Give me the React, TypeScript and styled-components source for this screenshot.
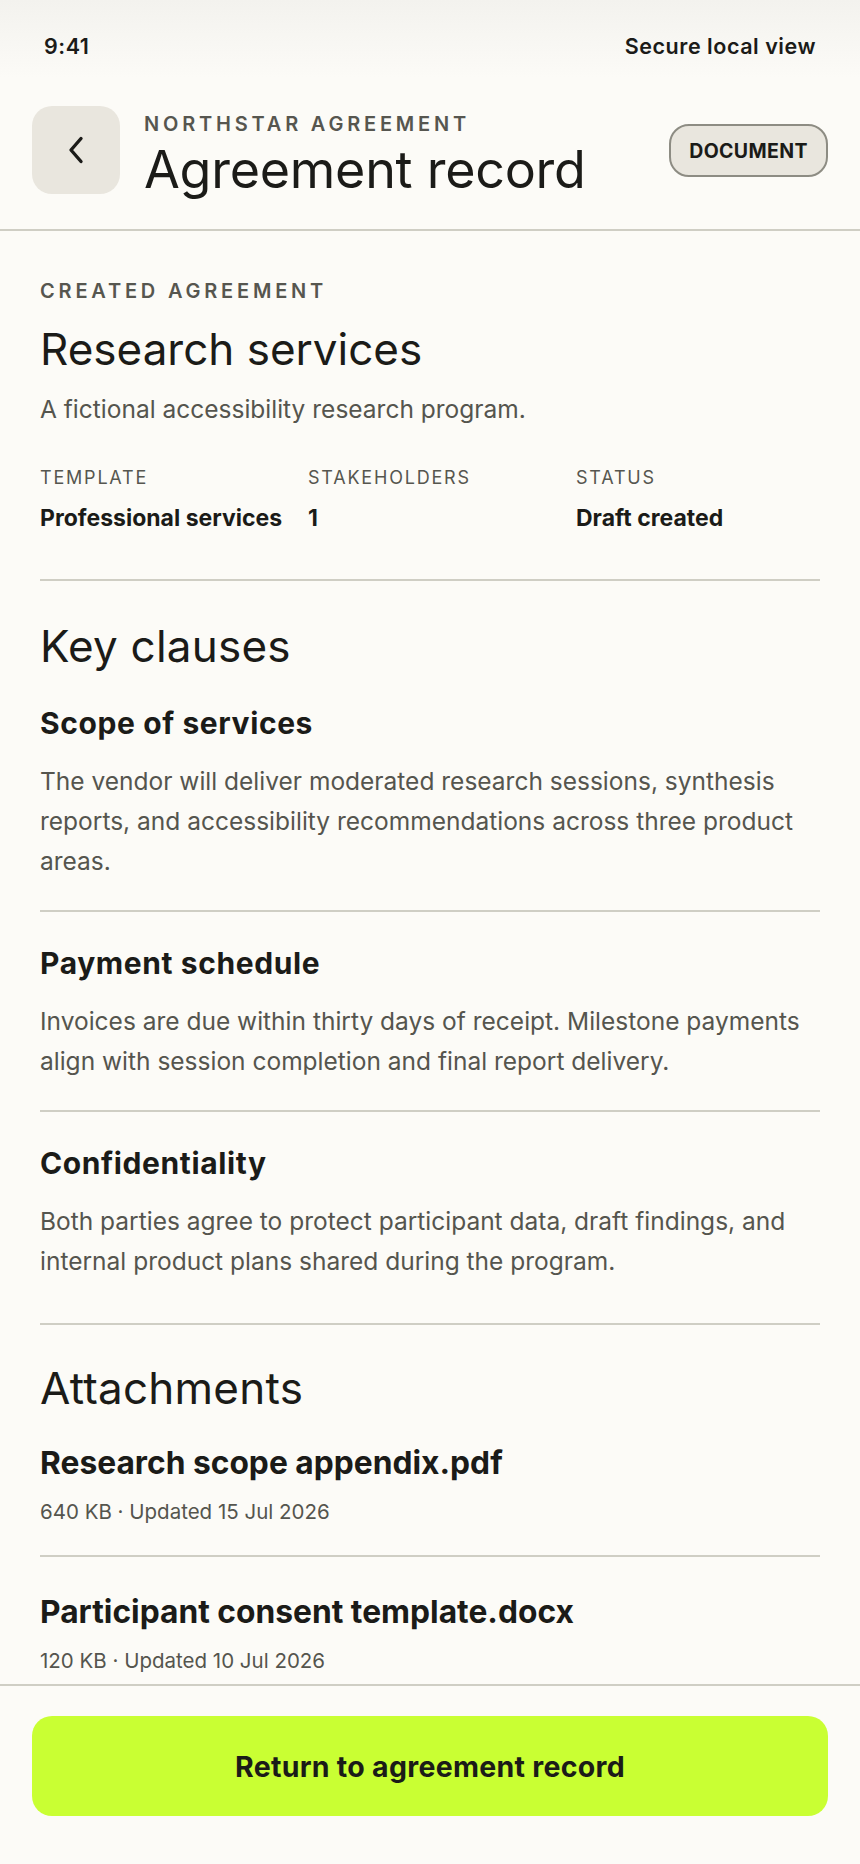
import React from 'react';
import styled, { createGlobalStyle } from 'styled-components';

const GlobalStyle = createGlobalStyle`
  html, body {
    margin: 0;
    padding: 0;
    background: #fcfbf7;
  }
  body {
    font-family: Inter, "Noto Sans", "Liberation Sans", sans-serif;
    color: #1b1b18;
    -webkit-font-smoothing: antialiased;
  }
  * {
    box-sizing: border-box;
  }
`;

interface Clause {
  title: string;
  body: string;
}

interface Attachment {
  name: string;
  size: string;
  updated: string;
}

const clauses: Clause[] = [
  {
    title: 'Scope of services',
    body: 'The vendor will deliver moderated research sessions, synthesis reports, and accessibility recommendations across three product areas.',
  },
  {
    title: 'Payment schedule',
    body: 'Invoices are due within thirty days of receipt. Milestone payments align with session completion and final report delivery.',
  },
  {
    title: 'Confidentiality',
    body: 'Both parties agree to protect participant data, draft findings, and internal product plans shared during the program.',
  },
];

const attachments: Attachment[] = [
  { name: 'Research scope appendix.pdf', size: '640 KB', updated: '15 Jul 2026' },
  { name: 'Participant consent template.docx', size: '120 KB', updated: '10 Jul 2026' },
];

const meta = [
  { label: 'Template', value: 'Professional services' },
  { label: 'Stakeholders', value: '1' },
  { label: 'Status', value: 'Draft created' },
];

const ChevronLeft = () => (
  <svg width="18" height="28" viewBox="0 0 18 28" fill="none">
    <path d="M14 2.5 L4 14 L14 25.5" stroke="#1b1b18" strokeWidth="3.4" strokeLinecap="round" strokeLinejoin="round" />
  </svg>
);

export default function App() {
  return (
    <>
      <GlobalStyle />
      <Screen>
        <StatusBar>
          <StatusText>9:41</StatusText>
          <StatusText>Secure local view</StatusText>
        </StatusBar>

        <Header>
          <BackButton aria-label="Back">
            <ChevronLeft />
          </BackButton>
          <TitleBlock>
            <HeaderEyebrow>Northstar agreement</HeaderEyebrow>
            <PageTitle>Agreement record</PageTitle>
          </TitleBlock>
          <TypePill>Document</TypePill>
        </Header>

        <Scroller>
          <Section>
            <Eyebrow>Created agreement</Eyebrow>
            <RecordTitle>Research services</RecordTitle>
            <Description>A fictional accessibility research program.</Description>
            <MetaGrid>
              {meta.map((m) => (
                <MetaCell key={m.label}>
                  <MetaLabel>{m.label}</MetaLabel>
                  <MetaValue>{m.value}</MetaValue>
                </MetaCell>
              ))}
            </MetaGrid>
          </Section>

          <Section variant="clauses">
            <SectionTitle>Key clauses</SectionTitle>
            {clauses.map((c) => (
              <ClauseItem key={c.title}>
                <ClauseTitle>{c.title}</ClauseTitle>
                <ClauseBody>{c.body}</ClauseBody>
              </ClauseItem>
            ))}
          </Section>

          <Section variant="files">
            <SectionTitle>Attachments</SectionTitle>
            {attachments.map((a) => (
              <AttachmentItem key={a.name}>
                <AttachmentName>{a.name}</AttachmentName>
                <AttachmentMeta>
                  {a.size} · Updated {a.updated}
                </AttachmentMeta>
              </AttachmentItem>
            ))}
          </Section>
        </Scroller>

        <Footer>
          <PrimaryButton>Return to agreement record</PrimaryButton>
        </Footer>
      </Screen>
    </>
  );
}

const Screen = styled.div`
  height: 100vh;
  display: flex;
  flex-direction: column;
  background: #fcfbf7;
  overflow: hidden;
`;

const StatusBar = styled.div`
  flex-shrink: 0;
  height: 92px;
  padding: 0 44px;
  display: flex;
  align-items: center;
  justify-content: space-between;
  background: linear-gradient(180deg, #f3f2ee 0%, #fcfbf7 85%);
`;

const StatusText = styled.span`
  font-size: 21.5px;
  font-weight: 600;
  letter-spacing: 0.025em;
  color: #1b1b18;
`;

const Header = styled.header`
  flex-shrink: 0;
  display: flex;
  align-items: flex-start;
  gap: 24px;
  padding: 14px 32px 30px;
  border-bottom: 2px solid #cfcec4;
`;

const BackButton = styled.button`
  flex-shrink: 0;
  width: 88px;
  height: 88px;
  border: none;
  border-radius: 20px;
  background: #e9e6de;
  display: flex;
  align-items: center;
  justify-content: center;
  padding: 0;
  cursor: pointer;
`;

const TitleBlock = styled.div`
  flex: 1;
  min-width: 0;
  padding-top: 5px;
  display: flex;
  flex-direction: column;
  gap: 4px;
`;

const Eyebrow = styled.div`
  font-size: 20px;
  line-height: 24px;
  font-weight: 600;
  letter-spacing: 0.19em;
  text-transform: uppercase;
  color: #56564f;
`;

const HeaderEyebrow = styled(Eyebrow)`
  line-height: 26px;
`;

const PageTitle = styled.h1`
  margin: 0;
  font-size: 52px;
  line-height: 58px;
  font-weight: 400;
  letter-spacing: -0.005em;
  color: #1b1b18;
  white-space: nowrap;
`;

const TypePill = styled.span`
  flex-shrink: 0;
  margin-top: 18px;
  height: 53px;
  padding: 0 18px;
  display: flex;
  align-items: center;
  border: 2px solid #8d8c83;
  border-radius: 20px;
  background: #e9e6de;
  font-size: 19.5px;
  font-weight: 700;
  letter-spacing: 0.02em;
  text-transform: uppercase;
  color: #1b1b18;
`;

const Scroller = styled.main`
  flex: 1;
  min-height: 0;
  overflow-y: auto;
  scrollbar-width: none;
  padding: 0 40px;

  &::-webkit-scrollbar {
    display: none;
  }
`;

type SectionVariant = 'summary' | 'clauses' | 'files';

const sectionPadding: Record<SectionVariant, string> = {
  summary: '48px 0 47px',
  clauses: '39px 0 13px',
  files: '37px 0 0',
};

const Section = styled.section<{ variant?: SectionVariant }>`
  padding: ${({ variant = 'summary' }) => sectionPadding[variant]};
  border-bottom: ${({ variant }) => (variant === 'files' ? 'none' : '2px solid #cfcec4')};
`;

const RecordTitle = styled.h2`
  margin: 20px 0 0;
  font-size: 44px;
  line-height: 52px;
  font-weight: 400;
`;

const Description = styled.p`
  margin: 18px 0 0;
  font-size: 24.5px;
  line-height: 32px;
  color: #55554e;
`;

const MetaGrid = styled.div`
  margin-top: 42px;
  display: grid;
  grid-template-columns: repeat(3, 1fr);
  column-gap: 24px;
`;

const MetaCell = styled.div`
  display: flex;
  flex-direction: column;
  gap: 15px;
`;

const MetaLabel = styled.span`
  font-size: 18px;
  line-height: 22px;
  letter-spacing: 0.1em;
  text-transform: uppercase;
  color: #56564f;
`;

const MetaValue = styled.span`
  font-size: 23px;
  line-height: 28px;
  font-weight: 700;
  white-space: nowrap;
`;

const SectionTitle = styled.h2`
  margin: 0;
  font-size: 44px;
  line-height: 52px;
  font-weight: 400;
  letter-spacing: 0.005em;
`;

const ClauseItem = styled.article`
  padding: 33px 0 29px;
  border-bottom: 2px solid #cfcec4;

  &:last-child {
    border-bottom: none;
  }
`;

const ClauseTitle = styled.h3`
  margin: 0;
  font-size: 30px;
  line-height: 36px;
  font-weight: 700;
  letter-spacing: 0.02em;
`;

const ClauseBody = styled.p`
  margin: 20px 0 0;
  font-size: 24.5px;
  line-height: 40px;
  color: #55554e;
`;

const AttachmentItem = styled.div`
  padding: 36px 0 31px;
  border-bottom: 2px solid #cfcec4;

  &:first-of-type {
    padding-top: 30px;
  }
`;

const AttachmentName = styled.div`
  font-size: 31.75px;
  line-height: 38px;
  font-weight: 700;
`;

const AttachmentMeta = styled.div`
  margin-top: 18px;
  font-size: 20.5px;
  line-height: 24px;
  color: #55554e;
`;

const Footer = styled.footer`
  flex-shrink: 0;
  padding: 30px 32px 48px;
  border-top: 2px solid #cfcec4;
  background: #fcfbf7;
`;

const PrimaryButton = styled.button`
  width: 100%;
  height: 100px;
  border: none;
  border-radius: 20px;
  background: #c9ff33;
  font-family: inherit;
  font-size: 28.5px;
  font-weight: 700;
  letter-spacing: 0.01em;
  color: #1b1b18;
  cursor: pointer;
`;
